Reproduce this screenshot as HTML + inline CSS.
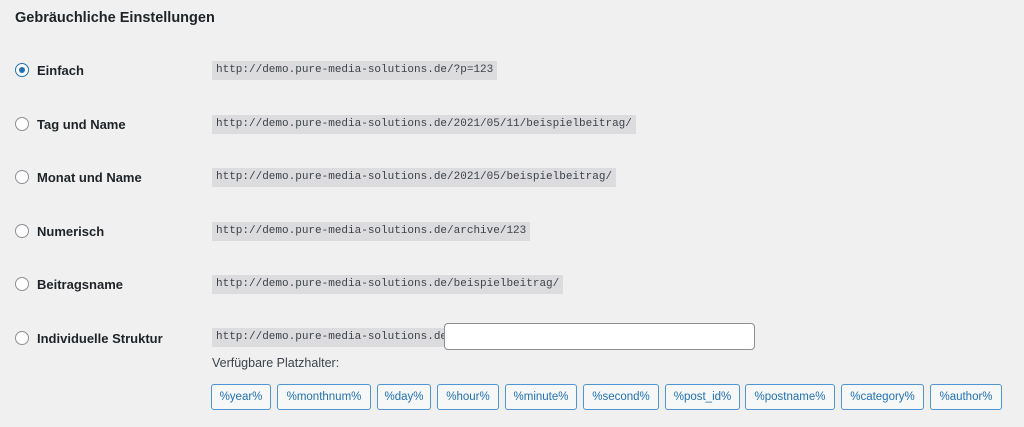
<!DOCTYPE html>
<html><head><meta charset="utf-8"><style>
body{margin:0;width:1024px;height:427px;background:#f0f0f1;font-family:"Liberation Sans",sans-serif;color:#1d2327;position:relative;overflow:hidden}
.a{position:absolute}
h2{position:absolute;left:15px;top:10px;margin:0;font-size:14.5px;font-weight:bold;color:#1d2327}
.r{position:absolute;left:15px;width:14px;height:14px;border:1px solid #8c8f94;border-radius:50%;background:#fff;box-sizing:border-box}
.r.on{border-color:#2271b1}
.r.on:after{content:"";position:absolute;left:3px;top:3px;width:6px;height:6px;border-radius:50%;background:#2271b1}
.l{position:absolute;left:37px;font-size:13px;font-weight:bold;color:#1d2327}
code{position:absolute;left:212px;height:19px;line-height:19px;padding:0 4px;background:#dcdcde;font-family:"Liberation Mono",monospace;font-size:11px;color:#3c434a}
.b{position:absolute;top:384px;height:26px;box-sizing:border-box;border:1px solid #4f94d4;border-radius:3px;background:#f6f7f7;color:#2271b1;font-size:11.5px;line-height:24px;text-align:center}
</style></head><body>
<h2>Gebräuchliche Einstellungen</h2>
<div class="r on" style="top:63px"></div><div class="l" style="top:63px">Einfach</div><code style="top:61px">http://demo.pure-media-solutions.de/?p=123</code>
<div class="r" style="top:117px"></div><div class="l" style="top:117px">Tag und Name</div><code style="top:115px">http://demo.pure-media-solutions.de/2021/05/11/beispielbeitrag/</code>
<div class="r" style="top:170px"></div><div class="l" style="top:170px">Monat und Name</div><code style="top:168px">http://demo.pure-media-solutions.de/2021/05/beispielbeitrag/</code>
<div class="r" style="top:224px"></div><div class="l" style="top:224px">Numerisch</div><code style="top:222px">http://demo.pure-media-solutions.de/archive/123</code>
<div class="r" style="top:277px"></div><div class="l" style="top:277px">Beitragsname</div><code style="top:275px">http://demo.pure-media-solutions.de/beispielbeitrag/</code>
<div class="r" style="top:331px"></div><div class="l" style="top:331px">Individuelle Struktur</div><code style="top:328px">http://demo.pure-media-solutions.de</code>
<div class="a" style="left:444px;top:323px;width:311px;height:27px;box-sizing:border-box;border:1px solid #8c8f94;border-radius:4px;background:#fff"></div>
<div class="a" style="left:212px;top:356px;font-size:12.5px;color:#3c434a">Verfügbare Platzhalter:</div>
<div class="b" style="left:211px;width:60px">%year%</div>
<div class="b" style="left:277px;width:94px">%monthnum%</div>
<div class="b" style="left:377px;width:54px">%day%</div>
<div class="b" style="left:437px;width:62px">%hour%</div>
<div class="b" style="left:505px;width:72px">%minute%</div>
<div class="b" style="left:583px;width:76px">%second%</div>
<div class="b" style="left:665px;width:75px">%post_id%</div>
<div class="b" style="left:745px;width:90px">%postname%</div>
<div class="b" style="left:841px;width:83px">%category%</div>
<div class="b" style="left:930px;width:72px">%author%</div>
</body></html>
